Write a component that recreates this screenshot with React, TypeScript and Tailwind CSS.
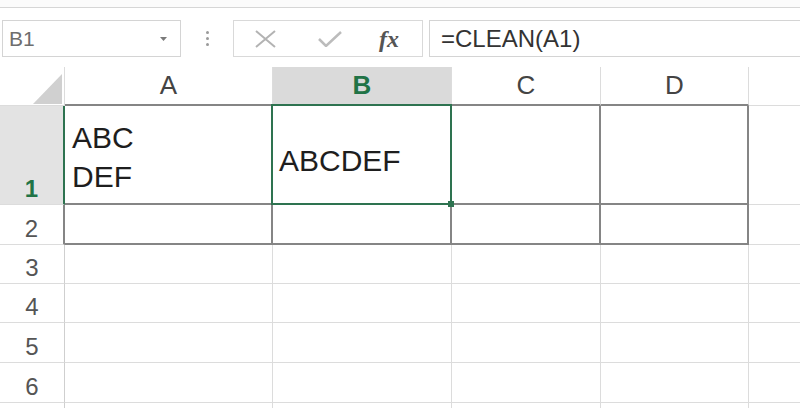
import React from 'react';

// Shared border colours for the sheet grid
const light = 'border-[#dcdcdc]';
const dark = 'border-[#858585]';

type CellProps = { className?: string; children?: React.ReactNode };

function Cell({ className = '', children }: CellProps) {
  return <div className={`min-w-0 ${className}`}>{children}</div>;
}

function FormulaBar() {
  return (
    <div className="mt-[12px] flex h-[37px] items-stretch">
      {/* Name box */}
      <div className="ml-[2px] flex w-[179px] items-center border border-[#d4d4d4] pl-[6px] pr-[13px]">
        <span className="flex-1 text-[21px] leading-none text-[#6e6e6e]">B1</span>
        <svg width="7" height="4" viewBox="0 0 7 4">
          <path d="M0 0 L7 0 L3.5 4 Z" fill="#7a7a7a" />
        </svg>
      </div>

      {/* Grip dots */}
      <div className="flex w-[52px] flex-col items-center justify-center gap-[3px]">
        <span className="h-[3px] w-[3px] rounded-full bg-[#9a9a9a]" />
        <span className="h-[3px] w-[3px] rounded-full bg-[#9a9a9a]" />
        <span className="h-[3px] w-[3px] rounded-full bg-[#9a9a9a]" />
      </div>

      {/* Cancel / enter / fx */}
      <div className="flex w-[190px] items-center border border-[#d9d9d9] pl-[21px]">
        <svg width="21" height="18" viewBox="0 0 21 18">
          <path d="M1 1 L20 17 M20 1 L1 17" stroke="#b3b3b3" strokeWidth="2" fill="none" />
        </svg>
        <svg className="ml-[42px]" width="24" height="16" viewBox="0 0 24 16">
          <path d="M1 8 L8 15 L23 1" stroke="#bcbcbc" strokeWidth="2.5" fill="none" />
        </svg>
        <span className="ml-[37px] font-['Liberation_Serif',serif] text-[24px] font-bold italic leading-none text-[#555]">
          fx
        </span>
      </div>

      {/* Formula input */}
      <div className="ml-[6px] flex flex-1 items-center border border-r-0 border-[#d4d4d4] pl-[11px]">
        <span className="text-[24px] leading-none text-[#333]">=CLEAN(A1)</span>
      </div>
    </div>
  );
}

function Sheet() {
  const colHead = `flex items-center justify-center border-r border-b-2 ${light} text-[26px] text-[#444]`;
  const rowHead = 'flex items-end justify-center pb-[3px] text-[24px] leading-none text-[#555]';
  const rangeCell = `border-r-2 border-b-2 ${dark}`;
  const plainCell = `border-r border-b ${light}`;
  // row 7 only peeks in at the bottom edge, its number is out of view
  const plainRows = ['3', '4', '5', '6', ''];

  return (
    <div className="mt-[10px] grid grid-cols-[65px_208px_179px_149px_148px_60px] grid-rows-[39px_99px_40px_39px_39px_40px_40px_40px]">
      {/* Header row */}
      <Cell className={`flex items-end justify-end border-r border-b ${light} pr-[2px] pb-[1px]`}>
        <svg width="29" height="30" viewBox="0 0 29 30">
          <path d="M29 0 L29 30 L0 30 Z" fill="#d0d0d0" />
        </svg>
      </Cell>
      <Cell className={`${colHead} border-b-[#858585]`}>A</Cell>
      <Cell className={`flex items-center justify-center border-r border-b-2 ${light} border-b-[#2e7350] bg-[#dadada] text-[26px] font-bold text-[#217346]`}>
        B
      </Cell>
      <Cell className={`${colHead} border-b-[#858585]`}>C</Cell>
      <Cell className={`${colHead} border-b-[#858585]`}>D</Cell>
      <Cell className={`border-b ${light}`} />

      {/* Row 1 */}
      <Cell className={`${rowHead} border-r-2 border-b border-r-[#2e7350] border-b-[#dcdcdc] bg-[#e3e3e3] font-bold text-[#217346]`}>
        1
      </Cell>
      <Cell className={`${rangeCell} pl-[7px] pt-[12px] text-[30px] leading-[39px] text-[#1e1e1e]`}>
        ABC
        <br />
        DEF
      </Cell>
      <Cell className={`relative ${rangeCell} pl-[6px] pt-[35px] text-[30px] leading-[39px] text-[#1e1e1e]`}>
        ABCDEF
        <div className="absolute -top-[2px] -right-[2px] -bottom-[2px] -left-[2px] z-10 border-2 border-[#2e7350]" />
        <div className="absolute -right-[4px] -bottom-[4px] z-20 h-[6px] w-[6px] bg-[#2e7350]" />
      </Cell>
      <Cell className={rangeCell} />
      <Cell className={rangeCell} />
      <Cell className={`border-b ${light}`} />

      {/* Row 2 */}
      <Cell className={`${rowHead} border-r-2 border-b border-r-[#858585] border-b-[#dcdcdc]`}>2</Cell>
      <Cell className={rangeCell} />
      <Cell className={rangeCell} />
      <Cell className={rangeCell} />
      <Cell className={rangeCell} />
      <Cell className={`border-b ${light}`} />

      {/* Empty rows */}
      {plainRows.map((n, i) => (
        <React.Fragment key={i}>
          <Cell className={`${rowHead} border-r border-b border-r-[#cfcfcf] border-b-[#dcdcdc]`}>{n}</Cell>
          <Cell className={plainCell} />
          <Cell className={plainCell} />
          <Cell className={plainCell} />
          <Cell className={plainCell} />
          <Cell className={`border-b ${light}`} />
        </React.Fragment>
      ))}
    </div>
  );
}

export default function App() {
  return (
    <div className="h-[408px] w-[800px] overflow-hidden bg-white font-['Liberation_Sans',Arial,sans-serif] text-[#222]">
      {/* Ribbon edge, cut off at the top of the shot */}
      <div className="h-[8px] border-b border-[#d6d6d6] bg-[#fbfbfb]" />
      <FormulaBar />
      <Sheet />
    </div>
  );
}
